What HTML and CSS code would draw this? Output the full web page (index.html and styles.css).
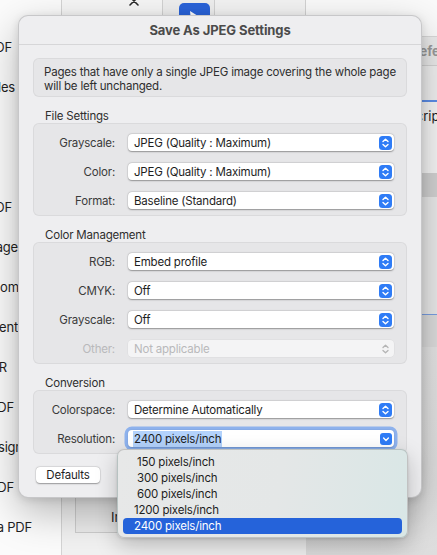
FILE: index.html
```html
<!DOCTYPE html>
<html>
<head>
<meta charset="utf-8">
<link rel="stylesheet" href="styles.css">
</head>
<body>
<div class="screen">
  <aside class="sidebar">
    <div class="si e12">Export PDF</div>
    <div class="si e15">Combine Files</div>
    <div class="si"></div>
    <div class="si"></div>
    <div class="si e12">Edit PDF</div>
    <div class="si e18">Convert to Image</div>
    <div class="si e49">Comment</div>
    <div class="si e18">Document</div>
    <div class="si e7">Run OCR</div>
    <div class="si e14">Protect PDF</div>
    <div class="si e60">Request signatures</div>
    <div class="si e14">Compress PDF</div>
    <div class="si e32">Create a PDF</div>
  </aside>
  <div class="main">
    <div class="toolbar">
      <div class="tb-seg tb-a">
        <svg class="tb-x" width="10" height="10" viewBox="0 0 10 10"><path d="M1 1 L9 9 M9 1 L1 9" stroke="#2a2a2a" stroke-width="1.6" stroke-linecap="round"/></svg>
      </div>
      <div class="tb-seg tb-b">
        <div class="tb-blue">
          <svg width="31" height="30" viewBox="0 0 31 30"><path d="M11 8 L19 13 L14.5 14 L12 18 Z" fill="#fff"/></svg>
        </div>
      </div>
      <div class="tb-seg tb-c"></div>
      <div class="tb-seg tb-d"></div>
    </div>
    <div class="content">
      <div class="doc">
        <div class="card"><span>In</span></div>
      </div>
      <div class="panel">
        <div class="p-head">Preferences</div>
        <div class="p-tabs"></div>
        <div class="p-desc">Description</div>
        <div class="p-band"></div>
        <div class="p-area"></div>
        <div class="p-band2"></div>
        <div class="p-rest"></div>
      </div>
    </div>
  </div>

  <div class="dialog">
    <div class="titlebar">Save As JPEG Settings</div>
    <div class="dbody">
      <div class="info">Pages that have only a single JPEG image covering the whole page<br>will be left unchanged.</div>

      <div class="sec-label">File Settings</div>
      <div class="group">
        <div class="row"><div class="lbl">Grayscale:</div><div class="popup"><span class="ptext">JPEG (Quality : Maximum)</span><span class="stepper"><svg width="13" height="14" viewBox="0 0 13 14"><path d="M4 5.6 L6.5 3.3 L9 5.6 M4 8.4 L6.5 10.7 L9 8.4" fill="none" stroke="#fff" stroke-width="1.4" stroke-linecap="round" stroke-linejoin="round"/></svg></span></div></div>
        <div class="row"><div class="lbl">Color:</div><div class="popup"><span class="ptext">JPEG (Quality : Maximum)</span><span class="stepper"><svg width="13" height="14" viewBox="0 0 13 14"><path d="M4 5.6 L6.5 3.3 L9 5.6 M4 8.4 L6.5 10.7 L9 8.4" fill="none" stroke="#fff" stroke-width="1.4" stroke-linecap="round" stroke-linejoin="round"/></svg></span></div></div>
        <div class="row"><div class="lbl">Format:</div><div class="popup"><span class="ptext">Baseline (Standard)</span><span class="stepper"><svg width="13" height="14" viewBox="0 0 13 14"><path d="M4 5.6 L6.5 3.3 L9 5.6 M4 8.4 L6.5 10.7 L9 8.4" fill="none" stroke="#fff" stroke-width="1.4" stroke-linecap="round" stroke-linejoin="round"/></svg></span></div></div>
      </div>

      <div class="sec-label">Color Management</div>
      <div class="group">
        <div class="row"><div class="lbl">RGB:</div><div class="popup"><span class="ptext">Embed profile</span><span class="stepper"><svg width="13" height="14" viewBox="0 0 13 14"><path d="M4 5.6 L6.5 3.3 L9 5.6 M4 8.4 L6.5 10.7 L9 8.4" fill="none" stroke="#fff" stroke-width="1.4" stroke-linecap="round" stroke-linejoin="round"/></svg></span></div></div>
        <div class="row"><div class="lbl">CMYK:</div><div class="popup"><span class="ptext">Off</span><span class="stepper"><svg width="13" height="14" viewBox="0 0 13 14"><path d="M4 5.6 L6.5 3.3 L9 5.6 M4 8.4 L6.5 10.7 L9 8.4" fill="none" stroke="#fff" stroke-width="1.4" stroke-linecap="round" stroke-linejoin="round"/></svg></span></div></div>
        <div class="row"><div class="lbl">Grayscale:</div><div class="popup"><span class="ptext">Off</span><span class="stepper"><svg width="13" height="14" viewBox="0 0 13 14"><path d="M4 5.6 L6.5 3.3 L9 5.6 M4 8.4 L6.5 10.7 L9 8.4" fill="none" stroke="#fff" stroke-width="1.4" stroke-linecap="round" stroke-linejoin="round"/></svg></span></div></div>
        <div class="row disabled"><div class="lbl">Other:</div><div class="popup"><span class="ptext">Not applicable</span><span class="stepper"><svg width="13" height="14" viewBox="0 0 13 14"><path d="M4 5.6 L6.5 3.3 L9 5.6 M4 8.4 L6.5 10.7 L9 8.4" fill="none" stroke="#b4b4b4" stroke-width="1.3" stroke-linecap="round" stroke-linejoin="round"/></svg></span></div></div>
      </div>

      <div class="sec-label">Conversion</div>
      <div class="group">
        <div class="row"><div class="lbl">Colorspace:</div><div class="popup"><span class="ptext">Determine Automatically</span><span class="stepper"><svg width="13" height="14" viewBox="0 0 13 14"><path d="M4 5.6 L6.5 3.3 L9 5.6 M4 8.4 L6.5 10.7 L9 8.4" fill="none" stroke="#fff" stroke-width="1.4" stroke-linecap="round" stroke-linejoin="round"/></svg></span></div></div>
        <div class="row"><div class="lbl">Resolution:</div><div class="popup focused"><span class="ptext sel-wrap"><span class="sel">2400 pixels/inch</span></span><span class="dropind"><svg width="12" height="12" viewBox="0 0 12 12"><path d="M3.6 5 L6 7.4 L8.4 5" fill="none" stroke="#fff" stroke-width="1.4" stroke-linecap="round" stroke-linejoin="round"/></svg></span></div></div>
      </div>

      <div class="btnrow"><div class="btn">Defaults</div></div>
    </div>
  </div>

  <div class="menu">
    <div class="mi n3">150 pixels/inch</div>
    <div class="mi n3">300 pixels/inch</div>
    <div class="mi n3">600 pixels/inch</div>
    <div class="mi n4">1200 pixels/inch</div>
    <div class="mi n4 hl">2400 pixels/inch</div>
  </div>
</div>
</body>
</html>
```
FILE: styles.css
```css
html, body {
  margin: 0;
  padding: 0;
}
body {
  width: 437px;
  height: 555px;
  overflow: hidden;
  font-family: "Inter", "Liberation Sans", sans-serif;
}
.screen {
  position: relative;
  width: 437px;
  height: 555px;
  display: flex;
  overflow: hidden;
  background: #e6e6e6;
}

/* background sidebar */
.sidebar {
  width: 62px;
  flex: none;
  box-sizing: border-box;
  background: #fbfbfb;
  border-right: 1px solid #d4d4d4;
  padding-top: 27px;
  display: flex;
  flex-direction: column;
}
.si {
  height: 40px;
  flex: none;
  line-height: 40px;
  font-size: 13px;
  letter-spacing: -0.2px;
  color: #1f1f1f;
  display: flex;
  justify-content: flex-end;
  white-space: nowrap;
}
.e7 { padding-right: 54px; }
.e12 { padding-right: 49px; }
.e14 { padding-right: 47px; }
.e15 { padding-right: 46px; }
.e18 { padding-right: 43px; }
.e32 { padding-right: 29px; }
.e49 { padding-right: 12px; }
.e60 { padding-right: 1px; }

/* background main */
.main {
  flex: 1;
  display: flex;
  flex-direction: column;
  min-width: 0;
}
.toolbar {
  height: 36px;
  flex: none;
  display: flex;
  background: #f6f6f6;
  border-bottom: 1px solid #d8d8d8;
}
.tb-seg {
  height: 100%;
  box-sizing: border-box;
  border-right: 1px solid #d2d2d2;
}
.tb-a {
  width: 101px;
  display: flex;
  justify-content: flex-end;
  padding-right: 23px;
}
.tb-x {
  margin-top: -4px;
}
.tb-b {
  width: 52px;
  background: #efefef;
  padding-left: 16px;
  padding-top: 3px;
}
.tb-blue {
  width: 31px;
  height: 30px;
  border-radius: 5px;
  background: #2a63d9;
}
.tb-blue svg { display: block; }
.tb-c {
  width: 91px;
  background: #f3f3f3;
}
.tb-d {
  flex: 1;
  border-right: none;
  background: #fafafa;
}
.content {
  flex: 1;
  display: flex;
  min-height: 0;
}
.doc {
  width: 244px;
  background: #f1f1f1;
  display: flex;
  flex-direction: column;
  justify-content: flex-end;
  padding-bottom: 22px;
  box-sizing: border-box;
}
.card {
  margin-left: 13px;
  height: 120px;
  background: #ebebeb;
  border: 1px solid #cdcdcd;
  box-sizing: border-box;
  display: flex;
  align-items: flex-end;
  padding-left: 35px;
  padding-bottom: 7px;
  font-size: 13px;
  color: #1f1f1f;
}
.panel {
  flex: 1;
  display: flex;
  flex-direction: column;
  white-space: nowrap;
  overflow: hidden;
}
.p-head {
  height: 28px;
  line-height: 28px;
  background: #ebebeb;
  border-bottom: 1px solid #d4d4d4;
  padding-left: 100px;
  font-size: 13px;
  font-weight: 700;
  color: #9a9a9a;
}
.p-tabs {
  height: 34px;
  background: #f1f1f1;
  border-bottom: 2px solid #5d8fea;
}
.p-desc {
  height: 71px;
  box-sizing: border-box;
  background: #f7f7f7;
  padding-left: 86px;
  padding-top: 6px;
  line-height: 16px;
  font-size: 13px;
  color: #1f1f1f;
}
.p-band {
  height: 24px;
  background: #d3d3d3;
}
.p-area {
  height: 117px;
  background: #ebebeb;
  border-bottom: 1px solid #7a9fe4;
}
.p-band2 {
  height: 32px;
  background: #dedede;
}
.p-rest {
  flex: 1;
  background: linear-gradient(#e6e6e6, #dddddd);
}

/* dialog */
.dialog {
  position: absolute;
  left: 18px;
  top: 15px;
  width: 404px;
  height: 483px;
  box-sizing: border-box;
  background: #eeeef0;
  border: 1px solid rgba(0, 0, 0, 0.16);
  border-radius: 10px;
  box-shadow: 0 14px 40px rgba(0, 0, 0, 0.28), 0 2px 8px rgba(0, 0, 0, 0.12);
  display: flex;
  flex-direction: column;
  font-size: 11.5px;
  letter-spacing: -0.2px;
}
.titlebar {
  height: 28px;
  line-height: 28px;
  flex: none;
  border-bottom: 1px solid #d6d6d8;
  text-align: center;
  font-size: 13px;
  letter-spacing: -0.1px;
  font-weight: 700;
  color: #4b4b4b;
}
.dbody {
  padding: 13px 14px 0 14px;
  display: flex;
  flex-direction: column;
}
.info {
  height: 39px;
  box-sizing: border-box;
  background: #e6e6e8;
  border: 1px solid rgba(0, 0, 0, 0.05);
  border-radius: 6px;
  padding: 6px 10px;
  line-height: 14px;
  color: #2e2e2e;
  white-space: nowrap;
}
.sec-label {
  margin-top: 12px;
  padding-left: 12px;
  height: 14px;
  line-height: 14px;
  color: #2e2e2e;
}
.group {
  background: #e6e6e8;
  border: 1px solid rgba(0, 0, 0, 0.05);
  border-radius: 6px;
  padding: 10px 12px 6px 0;
  display: flex;
  flex-direction: column;
  gap: 12px;
}
.row {
  height: 17px;
  display: flex;
  align-items: center;
}
.lbl {
  width: 81px;
  flex: none;
  text-align: right;
  color: #3a3a3a;
  margin-right: 13px;
}
.popup {
  flex: 1;
  height: 17px;
  box-sizing: border-box;
  background: #ffffff;
  border-radius: 4px;
  box-shadow: 0 0.5px 1.5px rgba(0, 0, 0, 0.35), 0 0 0 0.5px rgba(0, 0, 0, 0.06);
  display: flex;
  align-items: center;
  padding-left: 6px;
  padding-right: 2px;
}
.ptext {
  flex: 1;
  color: #1e1e1e;
  white-space: nowrap;
}
.stepper {
  width: 13px;
  height: 14px;
  border-radius: 3.5px;
  background: #2f7cf6;
  display: flex;
}
.stepper svg, .dropind svg { display: block; }
.disabled .lbl { color: #b9b9bb; }
.disabled .popup {
  background: #f4f4f5;
  box-shadow: 0 0 0 0.5px rgba(0, 0, 0, 0.05);
}
.disabled .ptext { color: #b9b9bb; }
.disabled .stepper { background: transparent; }

.popup.focused {
  box-shadow: 0 0 0 3.5px rgba(70, 135, 240, 0.55), 0 0.5px 1.5px rgba(0, 0, 0, 0.3);
  padding-left: 5px;
}
.sel {
  background: #b3d2fb;
  padding: 1px 1px;
}
.dropind {
  width: 12px;
  height: 12px;
  border-radius: 3px;
  background: #2f7cf6;
  display: flex;
}

.btnrow {
  margin-top: 13px;
  padding-left: 3px;
  display: flex;
}
.btn {
  width: 64px;
  height: 16px;
  line-height: 16px;
  text-align: center;
  background: #ffffff;
  border-radius: 4px;
  box-shadow: 0 0.5px 1.5px rgba(0, 0, 0, 0.35), 0 0 0 0.5px rgba(0, 0, 0, 0.06);
  color: #1e1e1e;
}

/* popup menu */
.menu {
  position: absolute;
  left: 117px;
  top: 449px;
  width: 291px;
  height: 89px;
  box-sizing: border-box;
  padding: 4px 5px;
  border-radius: 7px;
  background: linear-gradient(100deg, #e7e8e8 0%, #e4e7e7 55%, #d9e7e6 100%);
  border: 0.5px solid rgba(0, 0, 0, 0.16);
  box-shadow: 0 8px 22px rgba(0, 0, 0, 0.22), 0 1px 3px rgba(0, 0, 0, 0.12);
  display: flex;
  flex-direction: column;
  font-size: 11.5px;
  letter-spacing: -0.2px;
}
.mi {
  height: 16px;
  flex: none;
  line-height: 16px;
  color: #1e1e1e;
  border-radius: 4px;
  white-space: nowrap;
}
.n3 { padding-left: 14px; }
.n4 { padding-left: 11px; }
.mi.hl {
  background: #2563da;
  color: #ffffff;
}
```
